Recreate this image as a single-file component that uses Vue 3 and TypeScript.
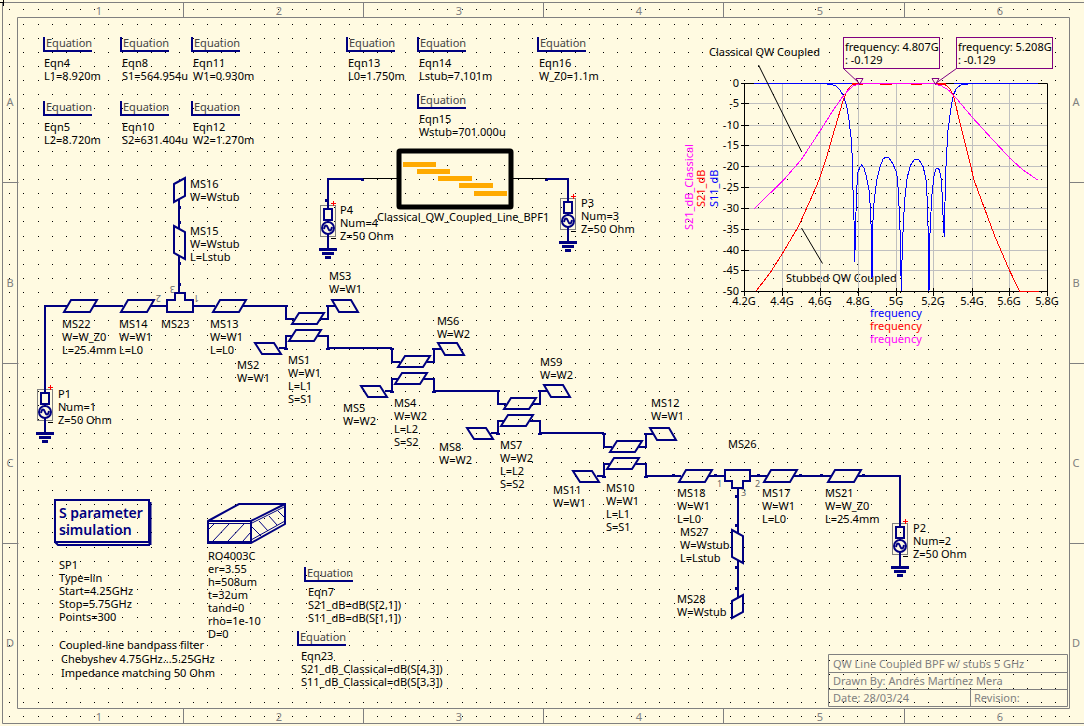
<script setup lang="ts">
interface Label { x: number; y: number; lines: string[] }
interface Equation { x: number; y: number; tx: number; ty: number; lines: string[] }
interface Point { x: number; y: number }

const LINE = 13

const seq = (n: number): number[] => Array.from({ length: n }, (_, i) => i)

const gridPath = seq(51)
  .map((r) => {
    const y = Math.floor(9.95 + 14.134 * r)
    return seq(76)
      .map((c) => `M${Math.floor(9.82 + 14.134 * c)} ${y}h1v1h-1z`)
      .join('')
  })
  .join('')

const columns = [99, 279, 459, 639, 820, 1000]
const columnLines = [183, 363, 543, 723, 904]
const rows = [
  { name: 'A', y: 106 },
  { name: 'B', y: 287 },
  { name: 'C', y: 467 },
  { name: 'D', y: 647 },
]
const rowLines = [182, 363, 543]

const equations: Equation[] = [
  { x: 44, y: 37, tx: 44, ty: 67, lines: ['Eqn4', 'L1=8.920m'] },
  { x: 121, y: 37, tx: 122, ty: 67, lines: ['Eqn8', 'S1=564.954u'] },
  { x: 192, y: 37, tx: 193, ty: 67, lines: ['Eqn11', 'W1=0.930m'] },
  { x: 347, y: 37, tx: 348, ty: 67, lines: ['Eqn13', 'L0=1.750m'] },
  { x: 418, y: 37, tx: 419, ty: 67, lines: ['Eqn14', 'Lstub=7.101m'] },
  { x: 538, y: 37, tx: 539, ty: 67, lines: ['Eqn16', 'W_Z0=1.1m'] },
  { x: 44, y: 101, tx: 44, ty: 131, lines: ['Eqn5', 'L2=8.720m'] },
  { x: 121, y: 101, tx: 122, ty: 131, lines: ['Eqn10', 'S2=631.404u'] },
  { x: 192, y: 101, tx: 193, ty: 131, lines: ['Eqn12', 'W2=1.270m'] },
  { x: 418, y: 94, tx: 419, ty: 123, lines: ['Eqn15', 'Wstub=701.000u'] },
  { x: 305, y: 567, tx: 308, ty: 596, lines: ['Eqn7', 'S21_dB=dB(S[2,1])', 'S11_dB=dB(S[1,1])'] },
  { x: 298, y: 631, tx: 301, ty: 660, lines: ['Eqn23', 'S21_dB_Classical=dB(S[4,3])', 'S11_dB_Classical=dB(S[3,3])'] },
]

const labels: Label[] = [
  { x: 190, y: 188, lines: ['MS16', 'W=Wstub'] },
  { x: 190, y: 235, lines: ['MS15', 'W=Wstub', 'L=Lstub'] },
  { x: 62, y: 328, lines: ['MS22', 'W=W_Z0', 'L=25.4mm'] },
  { x: 119, y: 328, lines: ['MS14', 'W=W1', 'L=L0'] },
  { x: 161, y: 328, lines: ['MS23'] },
  { x: 210, y: 328, lines: ['MS13', 'W=W1', 'L=L0'] },
  { x: 237, y: 369, lines: ['MS2', 'W=W1'] },
  { x: 58, y: 398, lines: ['P1', 'Num=1', 'Z=50 Ohm'] },
  { x: 340, y: 214, lines: ['P4', 'Num=4', 'Z=50 Ohm'] },
  { x: 581, y: 207, lines: ['P3', 'Num=3', 'Z=50 Ohm'] },
  { x: 913, y: 532, lines: ['P2', 'Num=2', 'Z=50 Ohm'] },
  { x: 377, y: 221, lines: ['Classical_QW_Coupled_Line_BPF1'] },
  { x: 329, y: 280, lines: ['MS3', 'W=W1'] },
  { x: 288, y: 364, lines: ['MS1', 'W=W1', 'L=L1', 'S=S1'] },
  { x: 437, y: 325, lines: ['MS6', 'W=W2'] },
  { x: 343, y: 412, lines: ['MS5', 'W=W2'] },
  { x: 394, y: 407, lines: ['MS4', 'W=W2', 'L=L2', 'S=S2'] },
  { x: 540, y: 366, lines: ['MS9', 'W=W2'] },
  { x: 439, y: 451, lines: ['MS8', 'W=W2'] },
  { x: 500, y: 449, lines: ['MS7', 'W=W2', 'L=L2', 'S=S2'] },
  { x: 651, y: 407, lines: ['MS12', 'W=W1'] },
  { x: 553, y: 494, lines: ['MS11', 'W=W1'] },
  { x: 606, y: 492, lines: ['MS10', 'W=W1', 'L=L1', 'S=S1'] },
  { x: 677, y: 497, lines: ['MS18', 'W=W1', 'L=L0'] },
  { x: 680, y: 536, lines: ['MS27', 'W=Wstub', 'L=Lstub'] },
  { x: 677, y: 603, lines: ['MS28', 'W=Wstub'] },
  { x: 728, y: 448, lines: ['MS26'] },
  { x: 762, y: 497, lines: ['MS17', 'W=W1', 'L=L0'] },
  { x: 825, y: 497, lines: ['MS21', 'W=W_Z0', 'L=25.4mm'] },
  { x: 59, y: 569, lines: ['SP1', 'Type=lin', 'Start=4.25GHz', 'Stop=5.75GHz', 'Points=300'] },
  { x: 208, y: 560, lines: ['RO4003C', 'er=3.55', 'h=508um', 't=32um', 'tand=0', 'rho=1e-10', 'D=0'] },
  { x: 59, y: 649, lines: ['Coupled-line bandpass filter'] },
  { x: 61, y: 663, lines: ['Chebyshev 4.75GHz...5.25GHz'] },
  { x: 61, y: 677, lines: ['Impedance matching 50 Ohm'] },
  { x: 709, y: 56, lines: ['Classical QW Coupled'] },
  { x: 786, y: 282, lines: ['Stubbed QW Coupled'] },
]

const lineSections: Point[] = [
  { x: 80, y: 306 }, { x: 137, y: 306 }, { x: 229, y: 306 },
  { x: 695, y: 476 }, { x: 780, y: 476 }, { x: 844, y: 476 },
]

const stages: Point[] = [
  { x: 0, y: 0 }, { x: 106, y: 43 }, { x: 212, y: 85 }, { x: 318, y: 128 },
]

const ports: Point[] = [
  { x: 45, y: 389 }, { x: 328, y: 205 }, { x: 568, y: 198 }, { x: 900, y: 523 },
]

const nodes: Point[] = [
  { x: 363, y: 179 }, { x: 547, y: 179 }, { x: 327, y: 200 },
  { x: 674, y: 475 }, { x: 716, y: 475 }, { x: 759, y: 475 },
  { x: 801, y: 475 }, { x: 822, y: 475 }, { x: 864, y: 475 },
  { x: 737, y: 496 }, { x: 737, y: 525 }, { x: 737, y: 567 }, { x: 737, y: 588 },
  { x: 180, y: 207 }, { x: 180, y: 222 }, { x: 180, y: 263 }, { x: 180, y: 284 },
]

const bars = [
  { x: 403, y: 162, w: 33 }, { x: 417, y: 169, w: 33 }, { x: 438, y: 176, w: 34 },
  { x: 459, y: 183, w: 34 }, { x: 474, y: 191, w: 33 },
]

const yTicks = [83, 103, 125, 145, 166, 187, 208, 229, 250, 270, 291].map((y, i) => ({
  y, text: i === 0 ? '0' : String(-5 * i),
}))
const xNames = ['4.2G', '4.4G', '4.6G', '4.8G', '5G', '5.2G', '5.4G', '5.6G', '5.8G']
const xTicks = [744, 782, 820, 858, 896, 933, 972, 1009, 1047].map((x, i) => ({ x, text: xNames[i] }))

const s11 = '827,84.5 832,84.5 836,86 840,90 844,97 847,108 849,120 851,137 852.5,160 853,190 854,220 854.7,262 856,212 857,185 858,172 860,167 861.7,165 864,168 866.5,177 869.5,193 870.7,217 871.7,240 872,278 873,220 874,203 876.7,180 880,167 883,159 886,157 889,158 893,164 896.7,173 898.3,190 899.3,213 900.3,237 901.3,291 902.3,247 903.7,217 905,197 907.3,177 910.7,165 914,160 916,159 919,160 923.3,167 926,180 927.7,207 928.3,243 928.7,291 929.7,288 930,233 931.7,197 934.3,174 936,169 938,168 939.5,170 941.3,180 942.3,197 943.3,223 944.3,236.5 945,203 945.3,180 946.3,160 948,130 950.7,110 953.3,95 956.7,88 960.7,85 968,84.5'
const s21Left = '755.7,291.5 770,273 782.7,253 798.3,226.7 811.7,197 819,180 826.7,156.7 835,128 843.3,100 847.3,90 851.7,85 856,84.5 863,84.5'
const s21Right = '937,84.5 945,84.5 949.3,88 953.3,95 960,123 965,143 970,163 974,180 984.3,208 995,236.7 1009.3,270 1019.7,291.5 1038.7,291.5'
const classicLeft = '754.3,208.7 770,193.3 782.7,181 801,160 820.7,130 833.3,110 841.7,98 848.3,90 853.3,86 859,84'
const classicRight = '935,84 941.7,86 948.3,90 955,96.7 971.7,116.7 990,136.7 1010,158.3 1023,170 1038.5,180.5'

const markers = [
  { x: 843, text: 'frequency: 4.807G', tip: 859 },
  { x: 956, text: 'frequency: 5.208G', tip: 935 },
]

const axisNames = [
  { color: 'blue', y: 317 }, { color: 'red', y: 330 }, { color: 'magenta', y: 343 },
]
</script>

<template>
  <main class="sheet">
    <svg class="canvas" viewBox="0 0 1084 726" role="img" aria-label="Coupled-line bandpass filter schematic">
      <path class="dots" :d="gridPath" />

      <g class="frame">
        <path d="M1084 2.5H2.5V723.5H1084M1069.5 17.5H17.5V708.5H1069.5Z" />
        <path v-for="x in columnLines" :key="x" :d="`M${x + 0.5} 2.5V17.5M${x + 0.5} 708.5V723.5`" />
        <path v-for="y in rowLines" :key="y" :d="`M2.5 ${y + 0.5}H18.5M1069.5 ${y + 0.5}H1084`" />
        <path d="M828.5 654.5H1067.5V706.5H828.5ZM828.5 672.5H1067.5M828.5 689.5H1067.5M970.5 689.5V706.5" />
      </g>
      <path class="thin" d="M3.5 0V6M0 2.5H3" />
      <g class="muted">
        <template v-for="(x, i) in columns" :key="x">
          <text class="mid" :x="x" y="15">{{ i + 1 }}</text>
          <text class="mid" :x="x" y="721">{{ i + 1 }}</text>
        </template>
        <template v-for="r in rows" :key="r.name">
          <text class="mid" x="10" :y="r.y">{{ r.name }}</text>
          <text class="mid" x="1076" :y="r.y">{{ r.name }}</text>
        </template>
        <text x="833" y="668">QW Line Coupled BPF w/ stubs 5 GHz</text>
        <text x="833" y="685">Drawn By: Andrés Martínez Mera</text>
        <text x="833" y="702">Date: 28/03/24</text>
        <text x="974" y="702">Revision:</text>
      </g>

      <g v-for="e in equations" :key="e.lines[0]">
        <path class="wire" :d="`M${e.x} ${e.y}v14h48`" />
        <text class="eq" :x="e.x + 2" :y="e.y + 10">Equation</text>
        <text v-for="(t, i) in e.lines" :key="t" :x="e.tx" :y="e.ty + i * LINE">{{ t }}</text>
      </g>

      <g v-for="l in labels" :key="l.lines[0]">
        <text v-for="(t, i) in l.lines" :key="t" :x="l.x" :y="l.y + i * LINE">{{ t }}</text>
      </g>

      <g class="wire">
        <path d="M45 392V306H67M94 306H123M151 306H167M193 306H215M242 306H286" />
        <path d="M179 200V229M179 256V293M174 184L185 178V196L174 202ZM174 226L185 232V259L174 253Z" />
        <path d="M167 312V300H175V293H185V300H193V312Z" />
        <path d="M709 476H725M750 476H767M793 476H831M857 476H900V526" />
        <path d="M725 470H750V481H743V488H732V481H725Z" />
        <path d="M738 488V533M738 560V597M732 530L743 536V563L732 557ZM732 601L743 595V612L732 618Z" />
        <path d="M328 208V179H363M547 179H568V200" />
        <path v-for="s in lineSections" :key="`${s.x}-${s.y}`" :d="`M${s.x - 16} ${s.y + 6}l7 -12h26l-7 12z`" />
        <g v-for="s in stages" :key="s.x" :transform="`translate(${s.x} ${s.y})`">
          <path d="M286 305V319H294M321 319H328V306H335M332 300H351L358 312H339Z" />
          <path d="M292 324L299 313H324L317 324ZM289 341L296 330H321L314 341Z" />
          <path d="M292 336H286V348H279M255 343H274L281 354H262ZM318 336H328V348" />
          <path v-if="s.x < 318" d="M327 348H392" />
          <path v-else d="M327 348H363" />
          <path d="M284 306h4M326 306h4M284 349h4M326 349h4" />
        </g>
      </g>
      <rect v-for="n in nodes" :key="`${n.x}-${n.y}`" class="navy" :x="n.x - 2" :y="n.y - 1" width="3" height="3" />

      <g class="pin">
        <text transform="translate(199 295) rotate(180)">1</text>
        <text transform="translate(161 295) rotate(180)">2</text>
        <text transform="translate(175 286) rotate(180)">3</text>
        <text x="717" y="487">1</text>
        <text x="755" y="487">2</text>
        <text x="741" y="496">3</text>
      </g>

      <g v-for="p in ports" :key="p.x" :transform="`translate(${p.x} ${p.y})`">
        <rect class="port-box" x="-7.5" y="0.5" width="15" height="31" />
        <g class="wire">
          <rect x="-4" y="4" width="8" height="11" />
          <path d="M0 0V4M0 15V17M0 29V44" />
          <circle cx="0" cy="23" r="6" />
          <path d="M-4 24C-3 19 -1 20 0 23S3 27 4 22" />
        </g>
        <path class="ground" d="M-9 44.5H9M-6 48.5H6M-3 52.5H3" />
        <path class="plus" d="M3 -1.5H8M5.5 -4V1" />
        <path class="thin" d="M3 33.5H8" />
      </g>

      <path class="thin" d="M363 178.5H397M513 178.5H547" />
      <rect class="block" x="399" y="151" width="112" height="56" rx="1" />
      <rect v-for="b in bars" :key="b.x" class="bar" :x="b.x" :y="b.y" :width="b.w" height="5" />

      <g class="wire">
        <rect x="55" y="500" width="94" height="42" />
        <path d="M55 542L58 545H150" />
        <path class="shade" d="M150 502V545" />
      </g>
      <text class="sim" x="59" y="518">S parameter</text>
      <text class="sim" x="59" y="535">simulation</text>

      <g class="substrate">
        <path d="M208 521L239 504H285V524L251 543H208ZM251 521V543" />
        <path d="M208 542H251" />
        <path class="hatch" d="M208 523.5H251L285 506.5M251 540L285 521" />
        <path class="hatch" d="M208 530L214 524M213 541L229 524M228 541L244 524M243 541L250 533M251 526L261 536M259 521L268 531M269 516L277 525M278 511L285 518" />
        <path d="M208 521H251L285 504" />
      </g>

      <g class="chart">
        <path v-for="t in yTicks.slice(1, -1)" :key="t.y" class="grid" :d="`M745 ${t.y + 0.5}H1047`" />
        <path v-for="t in xTicks.slice(1, -1)" :key="t.x" class="grid" :d="`M${t.x + 0.5} 84V291`" />
        <path class="thin" d="M744.5 83.5H1047.5V291.5H744.5Z" />
        <template v-for="t in yTicks" :key="t.text">
          <path class="thin" :d="`M741 ${t.y + 0.5}H749`" />
          <text class="end" x="739" :y="t.y + 4">{{ t.text }}</text>
        </template>
        <template v-for="t in xTicks" :key="t.text">
          <path class="thin" :d="`M${t.x + 0.5} 288V296`" />
          <text class="mid" :x="t.x" y="305">{{ t.text }}</text>
        </template>
        <polyline class="curve stroke-blue" :points="s11" />
        <polyline class="curve stroke-red" :points="s21Left" />
        <polyline class="curve stroke-red" :points="s21Right" />
        <polyline class="curve stroke-magenta" :points="classicLeft" />
        <polyline class="curve stroke-magenta" :points="classicRight" />
        <path class="stroke-blue" d="M754 83.5H852M954 83.5H1038" />
        <path class="stroke-red" d="M880 84.5H892M911 84.5H922M852 83.5H860M935 83.5H946" />
        <path class="stroke-magenta" d="M859 83.5H936" />
        <path class="pointer" d="M758.5 65L801.5 151.5M801.5 228L822.5 263.5" />
        <text v-for="a in axisNames" :key="a.color" :class="a.color" x="870" :y="a.y">frequency</text>
        <text class="magenta" transform="translate(693 230) rotate(-90)">S21_dB_Classical</text>
        <text class="red" transform="translate(705 207) rotate(-90)">S21_dB</text>
        <text class="blue" transform="translate(718 207) rotate(-90)">S11_dB</text>
        <g v-for="m in markers" :key="m.x">
          <path class="marker" :d="`M${m.x + 0.5} 68.5L${m.tip + 0.5} 83.5M${m.tip - 3} 78.5h7l-3.5 6z`" />
          <rect class="marker-box" :x="m.x + 0.5" y="37.5" width="96" height="31" />
          <text :x="m.x + 2" y="51">{{ m.text }}</text>
          <text :x="m.x + 2" y="64">: -0.129</text>
        </g>
      </g>
    </svg>
  </main>
</template>

<style>
body {
  background: #fffae1;
}
</style>

<style scoped>
.sheet {
  background: #fffae1;
}
.canvas {
  display: block;
  width: 100%;
  height: auto;
  font-family: "Noto Sans", "Open Sans", sans-serif;
  font-size: 11px;
}
.canvas text {
  fill: #000;
  white-space: pre;
}
.dots {
  fill: #000;
  shape-rendering: crispEdges;
}
.canvas .mid {
  text-anchor: middle;
}
.canvas .end {
  text-anchor: end;
}
.frame {
  fill: none;
  stroke: #808080;
}
.canvas .muted text {
  fill: #808080;
}
.canvas .eq {
  fill: #444;
}
.canvas .pin text {
  fill: #666;
  font-size: 9px;
}
.wire {
  fill: none;
  stroke: #000080;
  stroke-width: 2;
}
.wire .shade {
  stroke-width: 3;
}
.navy {
  fill: #000080;
}
.thin {
  fill: none;
  stroke: #000;
}
.pointer {
  fill: none;
  stroke: #000;
}
.port-box {
  fill: none;
  stroke: #808080;
}
.ground {
  fill: none;
  stroke: #000080;
  stroke-width: 3;
}
.plus {
  fill: none;
  stroke: #f00;
}
.block {
  fill: none;
  stroke: #000;
  stroke-width: 5;
}
.bar {
  fill: #ffaa00;
}
.canvas .sim {
  fill: #000080;
  font-size: 14px;
  font-weight: 600;
}
.substrate {
  fill: none;
  stroke: #000080;
  stroke-width: 2;
}
.substrate .hatch {
  stroke-width: 1;
}
.grid {
  fill: none;
  stroke: #c0c0c0;
}
.curve {
  fill: none;
  shape-rendering: crispEdges;
}
.stroke-blue {
  stroke: #00f;
}
.stroke-red {
  stroke: #f00;
}
.stroke-magenta {
  stroke: #f0f;
}
.canvas .blue {
  fill: #00f;
}
.canvas .red {
  fill: #f00;
}
.canvas .magenta {
  fill: #f0f;
}
.marker {
  fill: none;
  stroke: #800080;
}
.marker-box {
  fill: #fffae1;
  stroke: #800080;
}
</style>
